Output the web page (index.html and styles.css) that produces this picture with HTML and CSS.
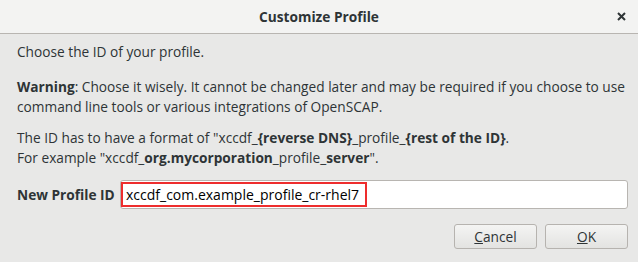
FILE: index.html
```html
<!DOCTYPE html>
<html lang="en">
<head>
  <meta charset="UTF-8">
  <title>Customize Profile</title>
  <link rel="stylesheet" href="styles.css">
</head>
<body>
  <div class="dialog">
    <header class="titlebar">
      <span class="title">Customize Profile</span>
      <span class="close">
        <svg width="9" height="9" viewBox="0 0 9 9"><path d="M1 1L8 8M8 1L1 8" stroke="#2e3436" stroke-width="2"/></svg>
      </span>
    </header>

    <main class="content">
      <p class="intro">Choose the ID of your profile.</p>
      <p><b>Warning</b>: Choose it wisely. It cannot be changed later and may be required if you choose to use command line tools or various integrations of OpenSCAP.</p>
      <p>The ID has to have a format of "xccdf_<b>{reverse DNS}</b>_profile_<b>{rest of the ID}</b>.<br>
        For example "xccdf_<b>org.mycorporation</b>_profile_<b>server</b>".</p>

      <div class="field">
        <label for="profileId">New Profile ID</label>
        <div class="entry">
          <span class="highlight">xccdf_com.example_profile_cr-rhel7</span>
        </div>
      </div>

      <div class="buttons">
        <button><u>C</u>ancel</button>
        <button><u>O</u>K</button>
      </div>
    </main>
  </div>
</body>
</html>
```

FILE: styles.css
```css
body {
  margin: 0;
  padding: 0;
  font-family: "Open Sans", sans-serif;
  font-size: 13.7px;
  color: #2e3436;
  background-color: #e8e8e7;
}

.dialog {
  width: 638px;
  height: 262px;
  display: flex;
  flex-direction: column;
}

.titlebar {
  height: 33px;
  flex-shrink: 0;
  background-color: #f3f3f2;
  border-bottom: 1px solid #b8b5b1;
  display: flex;
  align-items: center;
  justify-content: center;
  position: relative;
}

.title {
  font-weight: bold;
  font-size: 13.7px;
}

.close {
  position: absolute;
  right: 12px;
  top: 12px;
  line-height: 0;
}

.content {
  padding: 8px 10px 0 17px;
}

.content p {
  margin: 0 0 11px 0;
  line-height: 20px;
}

.content p.intro {
  margin-bottom: 15px;
}

.field {
  display: flex;
  align-items: center;
  margin-top: 12px;
}

.field label {
  font-weight: bold;
  width: 103px;
}

.entry {
  flex: 1;
  height: 27px;
  background: white;
  border: 1px solid #b8b5b1;
  border-radius: 3px;
  display: flex;
  align-items: center;
}

.highlight {
  border: 2px solid #ee2d2d;
  padding: 1px 6px 1px 3px;
  font-size: 14px;
  color: #000;
}

.buttons {
  display: flex;
  justify-content: flex-end;
  gap: 8px;
  margin-top: 15px;
}

.buttons button {
  width: 83px;
  height: 25px;
  font-family: inherit;
  font-size: 13.7px;
  color: #2e3436;
  background: linear-gradient(#f4f4f3, #e3e3e1);
  border: 1px solid #b6b3af;
  border-radius: 3px;
}
```
